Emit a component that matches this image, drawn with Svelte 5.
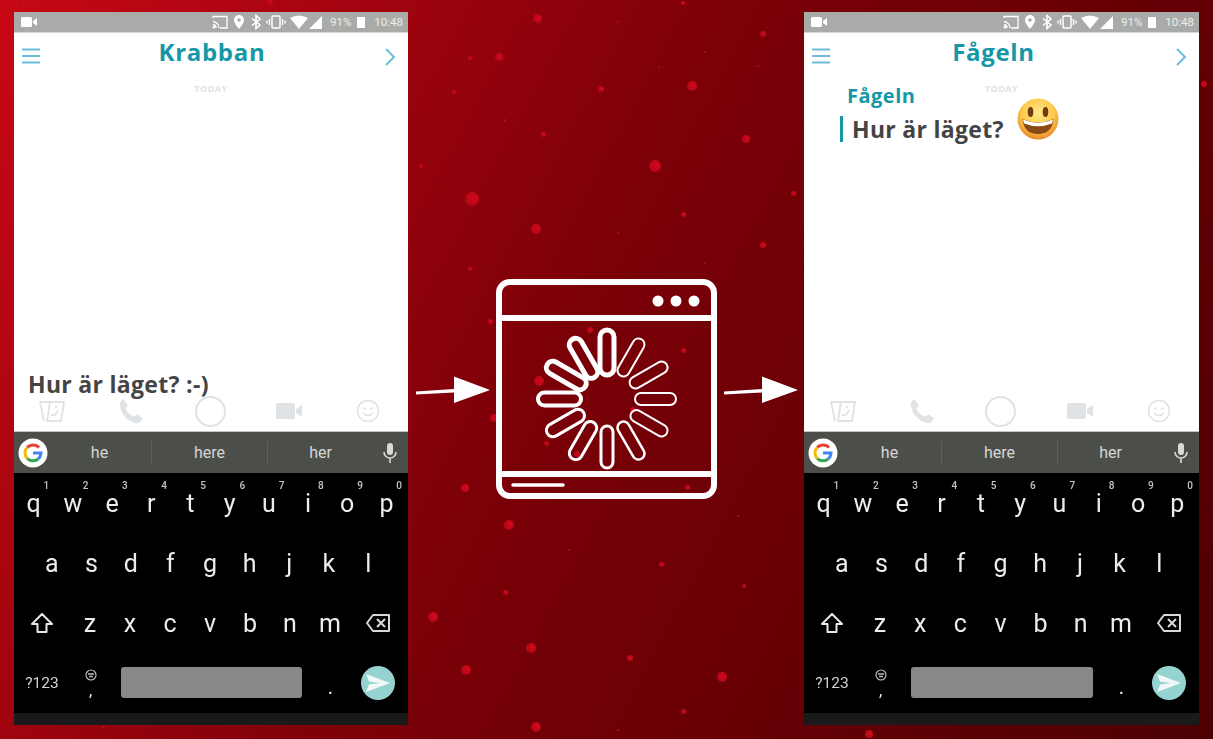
<script>
  const phones = [
    { title: 'Krabban', draft: 'Hur är läget? :-)', message: null, shifted: false },
    { title: 'Fågeln', draft: '', message: 'Hur är läget?', shifted: true }
  ];

  const hints = ['1', '2', '3', '4', '5', '6', '7', '8', '9', '0'];
  const rowOne = ['q', 'w', 'e', 'r', 't', 'y', 'u', 'i', 'o', 'p'];
  const rowTwo = ['a', 's', 'd', 'f', 'g', 'h', 'j', 'k', 'l'];
  const rowThree = ['z', 'x', 'c', 'v', 'b', 'n', 'm'];

  // x, y, radius of the bubbles in the backdrop
  const dots = [
    [537, 18, 4.5], [683, 3, 2], [763, 34, 3], [618, 22, 1], [470, 58, 2], [499, 57, 4], [705, 52, 1],
    [659, 67, 1], [758, 66, 1], [454, 92, 2], [601, 89, 3], [692, 86, 5], [504, 120, 1.5], [543, 134, 2.5],
    [746, 139, 4], [421, 166, 2], [655, 166, 6], [472, 199, 7], [793, 193, 2.5], [683, 214, 2.5], [536, 229, 5],
    [618, 233, 1], [763, 245, 3], [470, 269, 2], [705, 263, 1], [509, 525, 5], [465, 488, 4], [738, 516, 1],
    [569, 550, 1], [661, 564, 2.5], [744, 586, 2], [505, 592, 2.5], [433, 617, 5], [531, 648, 5], [630, 658, 3],
    [466, 670, 5], [722, 677, 5], [683, 711, 2.5], [536, 727, 5], [618, 730, 1], [590, 330, 3], [683, 350, 2.5],
    [539, 381, 5], [494, 418, 4], [546, 443, 2.5], [577, 454, 3], [687, 487, 2.5], [633, 410, 3], [490, 321, 2.5],
    [1204, 84, 3], [22, 2, 3], [270, 2, 3], [2, 61, 1.5], [103, 727, 1.5], [869, 734, 4]
  ];

  // one spoke every 30 degrees, clockwise from the top
  const spokes = [
    { w: 14, s: 5, r: 24 }, { w: 12, s: 2, r: 27 }, { w: 12, s: 2, r: 27 }, { w: 12, s: 2, r: 28 },
    { w: 12, s: 2, r: 28 }, { w: 12, s: 2.5, r: 27 }, { w: 12, s: 3, r: 27 }, { w: 13, s: 3, r: 27 },
    { w: 13, s: 3, r: 27 }, { w: 13, s: 4, r: 26 }, { w: 13, s: 5, r: 25 }, { w: 13, s: 5, r: 25 }
  ];
</script>

{#snippet phone(p)}
  <section class="phone">
    <div class="status">
      <svg class="video" viewBox="0 0 16 10" width="16" height="10">
        <rect x="0" y="0" width="11" height="10" rx="1.5" fill="#fff" />
        <path d="M12 4 L16 1 V9 L12 6 Z" fill="#fff" />
      </svg>
      <svg class="cluster" viewBox="0 0 110 16" width="110" height="16">
        <g fill="none" stroke="#fff">
          <path d="M1 4 V2.5 H15 V14 H8" stroke-width="1.3" />
          <path d="M1 7.5 A6.5 6.5 0 0 1 7 14 M1 10.5 A3.5 3.5 0 0 1 4 14" stroke-width="1.3" />
        </g>
        <circle cx="1.8" cy="13.2" r="1.2" fill="#fff" />
        <path fill-rule="evenodd" fill="#fff" d="M27 1 A5 5 0 0 1 32 6 C32 9.5 27 15 27 15 C27 15 22 9.5 22 6 A5 5 0 0 1 27 1 Z M27 4.2 A1.8 1.8 0 1 0 27 7.8 A1.8 1.8 0 1 0 27 4.2 Z" />
        <path d="M40 4.5 L48 11 L44 14.5 V1.5 L48 5 L40 11.5" fill="none" stroke="#fff" stroke-width="1.6" />
        <rect x="60" y="2" width="8" height="12" rx="1" fill="none" stroke="#fff" stroke-width="1.5" />
        <path d="M57.5 5 V11 M70.5 5 V11 M55 6.5 V9.5 M73 6.5 V9.5" stroke="#fff" stroke-width="1.4" />
        <path d="M78 4 Q87 -1 96 4 L87 15 Z" fill="#fff" />
        <path d="M110 2 V15 H97 Z" fill="#fff" />
      </svg>
      <span class="pct">91%</span>
      <span class="battery"></span>
      <span class="time">10:48</span>
    </div>

    <div class="screen">
      <header>
        <svg class="burger" viewBox="0 0 18 16" width="18" height="16">
          <path d="M0 1.5 H18 M0 8 H18 M0 14.5 H18" stroke="#6cbedb" stroke-width="2" />
        </svg>
        <h1 class:shifted={p.shifted}>{p.title}</h1>
        <svg class="chevron" viewBox="0 0 12 18" width="12" height="18">
          <path d="M2 1 L10 9 L2 17" fill="none" stroke="#6cbedb" stroke-width="2" />
        </svg>
      </header>

      <div class="chat">
        <div class="today">TODAY</div>
        {#if p.message}
          <div class="sender">{p.title}</div>
          <div class="message">
            <span class="text">{p.message}</span>
            <svg class="emoji" viewBox="0 0 44 44" width="44" height="44">
              <defs>
                <radialGradient id="face" cx="50%" cy="35%" r="65%">
                  <stop offset="0" stop-color="#ffe98a" />
                  <stop offset="0.6" stop-color="#fdc94a" />
                  <stop offset="1" stop-color="#e8892b" />
                </radialGradient>
              </defs>
              <circle cx="22" cy="22" r="20.5" fill="url(#face)" />
              <ellipse cx="14.5" cy="15" rx="2.8" ry="5" fill="#6e3d12" />
              <ellipse cx="29.5" cy="15" rx="2.8" ry="5" fill="#6e3d12" />
              <path d="M6.5 22 Q22 29 37.5 22 Q36 37 22 37 Q8 37 6.5 22 Z" fill="#8a4a16" />
              <path d="M7 22.5 Q22 29 37 22.5 L36 26.5 Q22 32 8 26.5 Z" fill="#fff" />
            </svg>
          </div>
        {/if}
        <div class="draft">{p.draft}</div>
      </div>

      <div class="tools">
        <svg viewBox="0 0 30 30" width="30" height="30">
          <g fill="none" stroke="#dfe3e5" stroke-width="1.8" stroke-linejoin="round">
            <path d="M7 25 L3 6 H13" />
            <path d="M13 6 H27 L24 25 H10 Z" />
            <path d="M14 19 Q19 20 21 14 M19 10 V12" />
          </g>
        </svg>
        <svg viewBox="0 0 24 24" width="26" height="26">
          <path d="M5 1 L9 7 L7 10 C8 13 11 16 15 17 L18 15 L23 19 C22 22 19 24 16 23 C9 21 3 15 2 8 C1 5 3 2 5 1 Z" fill="#dfe3e5" />
        </svg>
        <span class="capture"></span>
        <svg viewBox="0 0 26 16" width="26" height="16">
          <rect x="0" y="0" width="19" height="16" rx="2" fill="#dfe3e5" />
          <path d="M20 6 L26 2 V14 L20 10 Z" fill="#dfe3e5" />
        </svg>
        <svg viewBox="0 0 24 24" width="24" height="24">
          <circle cx="12" cy="12" r="10.5" fill="none" stroke="#dfe3e5" stroke-width="1.5" />
          <circle cx="8.5" cy="9.5" r="1.2" fill="#dfe3e5" />
          <circle cx="15.5" cy="9.5" r="1.2" fill="#dfe3e5" />
          <path d="M7 14 Q12 19 17 14" fill="none" stroke="#dfe3e5" stroke-width="1.5" />
        </svg>
      </div>
    </div>

    <div class="suggest">
      <svg class="google" viewBox="0 0 30 30" width="30" height="30">
        <circle cx="15" cy="15" r="14.5" fill="#fff" />
        <g fill="none" stroke-width="3">
          <path d="M21 9.5 A8 8 0 0 0 9.2 9.5" stroke="#e94235" />
          <path d="M9.2 9.5 A8 8 0 0 0 9.2 20.5" stroke="#fabb05" />
          <path d="M9.2 20.5 A8 8 0 0 0 20 21" stroke="#34a853" />
          <path d="M20 21 A8 8 0 0 0 23 15 H15" stroke="#4285f4" />
        </g>
      </svg>
      <span class="word first">he</span>
      <i></i>
      <span class="word second">here</span>
      <i></i>
      <span class="word third">her</span>
      <svg class="mic" viewBox="0 0 14 20" width="14" height="20">
        <rect x="4" y="0" width="6" height="12" rx="3" fill="#d8d8d8" />
        <path d="M1 9 A6 6 0 0 0 13 9 M7 15 V20" fill="none" stroke="#d8d8d8" stroke-width="1.6" />
      </svg>
    </div>

    <div class="keyboard">
      <div class="row">
        {#each rowOne as key, i}
          <span class="key">{key}<sup>{hints[i]}</sup></span>
        {/each}
      </div>
      <div class="row inset">
        {#each rowTwo as key}
          <span class="key">{key}</span>
        {/each}
      </div>
      <div class="row">
        <span class="key wide">
          <svg viewBox="0 0 24 22" width="24" height="22">
            <path d="M12 2 L22 12 H16.5 V20 H7.5 V12 H2 Z" fill="none" stroke="#e8e8e8" stroke-width="2" stroke-linejoin="round" />
          </svg>
        </span>
        {#each rowThree as key}
          <span class="key">{key}</span>
        {/each}
        <span class="key wide">
          <svg viewBox="0 0 26 20" width="26" height="20">
            <path d="M8 2 H24 V18 H8 L2 10 Z" fill="none" stroke="#d8d8d8" stroke-width="2" stroke-linejoin="round" />
            <path d="M12 6 L20 14 M20 6 L12 14" stroke="#d8d8d8" stroke-width="2" />
          </svg>
        </span>
      </div>
      <div class="row">
        <span class="key wide small">?123</span>
        <span class="key comma">,
          <svg viewBox="0 0 12 12" width="12" height="12">
            <circle cx="6" cy="6" r="5" fill="none" stroke="#bbb" stroke-width="1.2" />
            <path d="M3 5 H9 M4 7.5 H8" stroke="#bbb" stroke-width="1.4" />
          </svg>
        </span>
        <span class="space"><b></b></span>
        <span class="key dot">.</span>
        <span class="key wide">
          <span class="send">
            <svg viewBox="0 0 24 18" width="24" height="18">
              <path d="M0 0 L24 9 L0 18 L3 10.5 L14 9 L3 7.5 Z" fill="#f2f8f7" />
            </svg>
          </span>
        </span>
      </div>
    </div>
    <div class="navbar"></div>
  </section>
{/snippet}

<main>
  {#each dots as [x, y, r]}
    <span class="bubble" style="left:{x - r}px;top:{y - r}px;width:{r * 2}px;height:{r * 2}px"></span>
  {/each}

  {@render phone(phones[0])}

  <div class="middle">
    <svg class="arrow" viewBox="0 0 74 28" width="74" height="28">
      <path d="M0 15.5 L38 13 V11 V0.5 L74 14 L38 27 V16.5 L0 18.5 Z" fill="#fff" />
    </svg>
    <svg class="window" viewBox="0 0 222 222" width="222" height="222">
      <g fill="none" stroke="#fff" stroke-width="6">
        <rect x="3" y="3" width="215" height="214" rx="11" />
        <path d="M3 39 H218 M3 195 H218" />
      </g>
      <circle cx="162" cy="22" r="5.5" fill="#fff" />
      <circle cx="180" cy="22" r="5.5" fill="#fff" />
      <circle cx="198" cy="22" r="5.5" fill="#fff" />
      <path d="M17 206 H67" stroke="#fff" stroke-width="3.5" stroke-linecap="round" />
      <g transform="translate(111 120)">
        {#each spokes as spoke, i}
          <rect
            x={-spoke.w / 2}
            y={-69}
            width={spoke.w}
            height={69 - spoke.r}
            rx={spoke.w / 2}
            fill="none"
            stroke="#fff"
            stroke-width={spoke.s}
            transform="rotate({i * 30})"
          />
        {/each}
      </g>
    </svg>
    <svg class="arrow" viewBox="0 0 74 28" width="74" height="28">
      <path d="M0 15.5 L38 13 V11 V0.5 L74 14 L38 27 V16.5 L0 18.5 Z" fill="#fff" />
    </svg>
  </div>

  {@render phone(phones[1])}
</main>

<style>
  :global(body) {
    margin: 0;
  }

  main {
    position: relative;
    box-sizing: border-box;
    width: 1213px;
    height: 739px;
    overflow: hidden;
    padding: 12px 0 0 14px;
    display: flex;
    align-items: flex-start;
    background: linear-gradient(118deg, #c80816 0%, #7c0008 46%, #4c0002 100%);
    font-family: Roboto, "Liberation Sans", sans-serif;
  }

  .bubble {
    position: absolute;
    border-radius: 50%;
    background: radial-gradient(circle at 65% 40%, #d20a1c, #a80412);
  }

  .phone {
    position: relative;
    flex: none;
    width: 394px;
    height: 713px;
    display: flex;
    flex-direction: column;
    filter: blur(0.4px);
  }

  .phone:last-child {
    width: 395px;
  }

  .status {
    height: 20px;
    flex: none;
    display: flex;
    align-items: center;
    background: #a9aba8;
    border-bottom: 1px solid #d8d8d8;
    color: #eceeea;
    font-size: 11.5px;
  }

  .video {
    margin-left: 7px;
  }

  .cluster {
    margin-left: auto;
    margin-right: 8px;
  }

  .battery {
    width: 8px;
    height: 11px;
    margin: 0 9px 0 6px;
    background: #fff;
  }

  .time {
    margin-right: 5px;
  }

  .screen {
    height: 398px;
    flex: none;
    display: flex;
    flex-direction: column;
    background: #fff;
  }

  header {
    height: 43px;
    flex: none;
    display: flex;
    align-items: center;
    justify-content: space-between;
    padding: 0 12px 0 8px;
  }

  h1 {
    margin: 0 0 7px;
    font-family: "Open Sans", Lato, sans-serif;
    font-size: 24px;
    font-weight: 700;
    letter-spacing: 0.7px;
    color: #1597a8;
  }

  h1.shifted {
    margin-right: 18px;
  }

  .burger {
    margin-top: 3px;
  }

  .chevron {
    margin-top: 5px;
  }

  .chat {
    flex: 1;
    min-height: 0;
    display: flex;
    flex-direction: column;
    font-family: "Open Sans", Lato, sans-serif;
    font-weight: 700;
  }

  .today {
    height: 10px;
    margin-top: 8px;
    text-align: center;
    font-size: 9px;
    line-height: 10px;
    letter-spacing: 0.5px;
    color: #e2e2e2;
  }

  .sender {
    margin: -11px 0 0 43px;
    font-size: 20px;
    line-height: 26px;
    letter-spacing: 0.5px;
    color: #1597a8;
  }

  .message {
    position: relative;
    height: 26px;
    margin: 7px 0 0 36px;
    padding-left: 9px;
    border-left: 3px solid #1597a8;
    font-size: 23px;
    line-height: 26px;
    letter-spacing: 0.3px;
    color: #444;
  }

  .emoji {
    position: absolute;
    left: 173px;
    top: -19px;
  }

  .draft {
    margin: auto 0 -6px 14px;
    font-size: 23px;
    line-height: 30px;
    letter-spacing: 0.3px;
    color: #444;
  }

  .tools {
    height: 36px;
    flex: none;
    margin-bottom: 2px;
    padding-right: 2px;
    display: grid;
    grid-template-columns: repeat(5, 79px);
    justify-content: center;
    justify-items: center;
    align-items: center;
  }

  .capture {
    width: 27px;
    height: 27px;
    border: 2px solid #dfe3e5;
    border-radius: 50%;
  }

  .suggest {
    position: relative;
    height: 42px;
    flex: none;
    display: flex;
    align-items: center;
    background: #4c4e4a;
    border-top: 1px solid #c4c6c4;
    box-sizing: border-box;
    color: #d6d6d6;
    font-size: 16px;
  }

  .google {
    flex: none;
    margin-left: 4px;
  }

  .word {
    text-align: center;
  }

  .first {
    width: 103px;
  }

  .second {
    width: 115px;
  }

  .third {
    width: 105px;
  }

  .suggest i {
    width: 1px;
    height: 24px;
    background: #5f615d;
  }

  .mic {
    margin-left: auto;
    margin-right: 11px;
  }

  .keyboard {
    height: 240px;
    flex: none;
    background: #000;
    color: #ececec;
  }

  .row {
    height: 60px;
    display: flex;
    align-items: center;
    padding-right: 2px;
  }

  .row.inset {
    padding: 0 20px 0 18px;
  }

  .key {
    position: relative;
    flex: 1 1 0;
    display: flex;
    align-items: center;
    justify-content: center;
    height: 100%;
    font-size: 25px;
  }

  .key sup {
    position: absolute;
    top: 8px;
    right: 4px;
    font-size: 10px;
    line-height: 10px;
    font-weight: 500;
    color: #c4c4c4;
  }

  .key.wide {
    flex: none;
    width: 56px;
    margin: 0;
  }

  .key.small {
    font-size: 15.5px;
    color: #d0d0d0;
    width: 59px;
    padding-right: 3px;
    box-sizing: border-box;
  }

  .key.comma {
    flex: none;
    width: 21px;
    margin-left: 7px;
    flex-direction: column-reverse;
    justify-content: center;
    font-size: 16px;
    line-height: 14px;
  }

  .key.comma svg {
    margin-bottom: 3px;
  }

  .space {
    flex: 1;
    padding: 0 12px 0 20px;
  }

  .space b {
    display: block;
    height: 31px;
    margin-top: -1px;
    border-radius: 3px;
    background: #878986;
  }

  .key.dot {
    flex: none;
    width: 39px;
    margin-left: -3px;
    font-size: 20px;
    padding-top: 8px;
    box-sizing: border-box;
  }

  .send {
    width: 34px;
    height: 34px;
    border-radius: 50%;
    background: #95d3d0;
    display: flex;
    align-items: center;
    justify-content: center;
  }

  .navbar {
    height: 12px;
    background: #1a1a1a;
  }

  .middle {
    position: relative;
    flex: none;
    width: 396px;
    height: 713px;
    box-sizing: border-box;
    padding: 43px 0 0 2px;
    display: flex;
    align-items: center;
    justify-content: center;
    gap: 6px;
  }
</style>
